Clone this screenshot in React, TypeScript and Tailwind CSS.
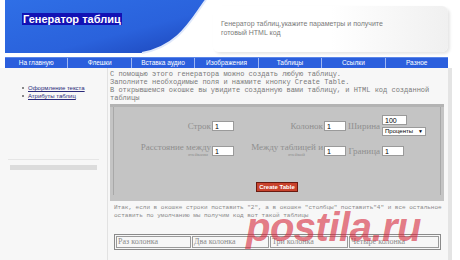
import React from 'react';

const navItems = ['На главную', 'Флешки', 'Вставка аудио', 'Изображения', 'Таблицы', 'Ссылки', 'Разное'];

const Field = ({ value = '1', w = 'w-[22px]' }: { value?: string; w?: string }) => (
  <span className={`inline-block ${w} h-[10px] bg-white border border-[#9a9a9a] text-[7px] leading-[9px] pl-[2px] text-black font-['Liberation_Sans',sans-serif]`}>
    {value}
  </span>
);

export default function App() {
  return (
    <div className="relative w-[460px] h-[260px] overflow-hidden bg-white font-['Liberation_Sans',Arial,sans-serif]">
      {/* header */}
      <div className="flex h-[57px]">
        <div className="relative w-[215px] h-[55px]">
          <svg width="215" height="55" viewBox="0 0 215 55" className="block">
            <defs>
              <linearGradient id="hdr" x1="0" y1="0" x2="1" y2="1">
                <stop offset="0" stopColor="#2f6fe6" />
                <stop offset="0.6" stopColor="#2a62dc" />
                <stop offset="1" stopColor="#1c44b8" />
              </linearGradient>
            </defs>
            <path d="M5 0 H206 C192 18 180 46 142 53 H5 Z" fill="url(#hdr)" />
            <path d="M206 0 C192 18 180 46 142 53" fill="none" stroke="#dfe8fb" strokeWidth="2" />
          </svg>
          <div className="absolute left-[22px] top-[13px] bg-[#1212b4] px-[1px] text-white font-bold text-[11px] leading-[12px]">
            Генератор таблиц
          </div>
        </div>
        <div className="flex-1 pt-[6px] pr-[12px]">
          <div className="h-[46px] rounded-[6px] bg-gradient-to-r from-white via-white to-[#f0f0f0] shadow-[2px_2px_3px_rgba(0,0,0,0.10)] pl-[8px] pt-[13px] text-[7px] leading-[9px] text-[#7a7a7a] -ml-[2px]">
            Генератор таблиц,укажите параметры и получите
            <br />
            готовый HTML код
          </div>
        </div>
      </div>

      {/* nav */}
      <div className="ml-[5px] w-[443px] h-[11px] flex bg-[#2b5fdd] border-t border-[#5b86e8]">
        {navItems.map((item, i) => (
          <div
            key={item}
            className={`flex-1 flex items-center justify-center text-white text-[6.5px] leading-[10px] ${i > 0 ? 'border-l border-[#9db6f2]' : ''}`}
          >
            {item}
          </div>
        ))}
      </div>

      {/* body */}
      <div className="flex h-[192px]">
        <div className="w-[108px] bg-[#f7f7f7] border-r border-[#e2e2e2] pt-[16px]">
          <ul className="pl-[22px] text-[6px] leading-[8px]">
            <li className="flex items-center gap-[4px]">
              <span className="w-[2px] h-[2px] bg-[#888]" />
              <span className="text-[#2a2a7a] underline">Оформление текста</span>
            </li>
            <li className="flex items-center gap-[4px]">
              <span className="w-[2px] h-[2px] bg-[#888]" />
              <span className="text-[#2a2a7a] underline">Атрибуты таблиц</span>
            </li>
          </ul>
          <div className="mt-[59px] mx-[8px] h-[1px] bg-[#e6e6e6]" />
          <div className="mt-[5px] mx-[10px] h-[5px] bg-[#dcdcdc]" />
        </div>

        <div className="w-[340px] bg-[#f7f7f7] pl-[2px] pr-[4px] pt-[2px]">
          <p className="text-[7px] leading-[8px] text-[#7a7a7a] font-['Liberation_Mono',monospace]">
            С помощью этого генератора можно создать любую таблицу.
            <br />
            Заполните необходимые поля и нажмите кнопку Create Table.
            <br />
            В открывшемся окошке вы увидите созданную вами таблицу, и HTML код созданной таблицы
          </p>

          <div className="mt-[2px] h-[97px] bg-[#c4c4c4] border-t-[3px] border-[#b3b3b3] px-[3px] pb-[6px]">
            <div className="h-full border-l border-r border-[#a8a8a8] font-['Liberation_Serif',serif] text-[#8f8f8f]">
              <div className="grid grid-cols-[98px_24px_88px_24px_34px_50px] items-center pt-[8px]">
                <span className="text-right text-[9px] leading-[10px] pr-[1px]">Строк</span>
                <Field />
                <span className="text-right text-[9px] leading-[10px] pr-[1px]">Колонок</span>
                <Field />
                <span className="text-right text-[9px] leading-[10px] pr-[2px]">Ширина</span>
                <div className="flex flex-col gap-[2px]">
                  <Field value="100" w="w-[25px]" />
                  <span className="inline-flex items-center justify-between w-[44px] h-[9px] bg-white border border-[#9a9a9a] text-[6px] leading-[7px] px-[2px] text-black font-['Liberation_Sans',sans-serif]">
                    Проценты <span className="text-[5px]">▼</span>
                  </span>
                </div>
              </div>
              <div className="grid grid-cols-[98px_24px_88px_24px_34px_50px] items-center mt-[7px]">
                <span className="text-right pr-[1px]">
                  <span className="block text-[9px] leading-[9px]">Расстояние между</span>
                  <span className="block text-[5px] leading-[6px] pr-[3px]">ячейками</span>
                </span>
                <Field />
                <span className="text-right pr-[1px]">
                  <span className="block text-[9px] leading-[9px]">Между таблицей и</span>
                  <span className="block text-[5px] leading-[6px] pr-[18px]">ячейкой</span>
                </span>
                <Field />
                <span className="text-right text-[9px] leading-[10px] pr-[2px]">Граница</span>
                <Field />
              </div>
              <div className="flex justify-center mt-[24px]">
                <span className="px-[2px] h-[10px] bg-[#c8422c] border border-[#6a1a10] text-white font-bold text-[6px] leading-[8px] font-['Liberation_Sans',sans-serif]">
                  Create Table
                </span>
              </div>
            </div>
          </div>

          <p className="mt-[3px] pl-[4px] text-[6px] leading-[8px] text-[#8a8a8a] font-['Liberation_Mono',monospace]">
            Итак, если в окошке строки поставить "2", а в окошке "столбцы" поставить"4" и все остальное оставить по умолчанию мы получим код вот такой таблицы
          </p>

          <div className="mt-[14px] ml-[4px] mr-[3px] grid grid-cols-[75px_77px_78px_1fr] border border-[#8a8a8a] p-[1px] gap-[1px] font-['Liberation_Serif',serif] text-[8px] leading-[10px] text-[#8a8a8a]">
            <span className="border border-[#9a9a9a] pl-[1px]">Раз колонка</span>
            <span className="border border-[#9a9a9a] pl-[1px]">Два колонка</span>
            <span className="border border-[#9a9a9a] pl-[1px]">Три колонка</span>
            <span className="border border-[#9a9a9a] pl-[1px]">Четыре колонка</span>
          </div>
        </div>

        <div className="w-[4px] bg-[#e4e4e4]" />
        <div className="flex-1 bg-white" />
      </div>

      {/* watermark */}
      <div className="absolute left-[246px] top-[203px] text-[40px] leading-[48px] font-bold italic text-[rgba(214,40,60,0.62)] font-['Liberation_Sans',sans-serif] tracking-[-0.5px]">
        postila.ru
      </div>
    </div>
  );
}
